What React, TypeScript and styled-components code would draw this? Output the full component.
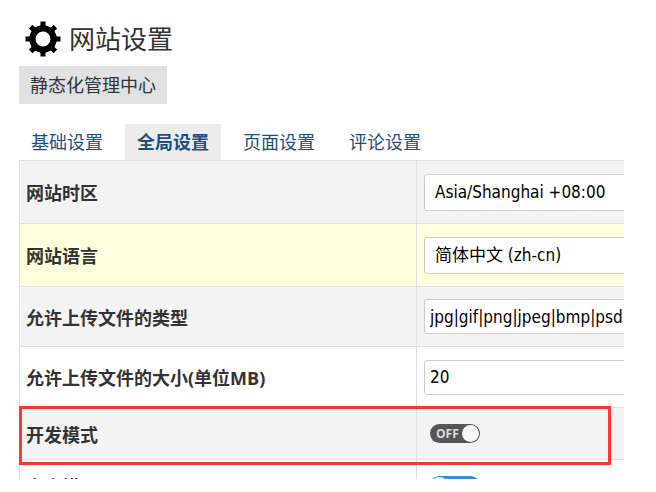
import React from "react";
import styled, { createGlobalStyle } from "styled-components";

const line = "#dfdfdf";

const GlobalStyle = createGlobalStyle`
  * { box-sizing: border-box; }
  body {
    margin: 0;
    background: #fff;
    color: #333;
    font: 18px/24px "Open Sans", "Noto Sans CJK SC", sans-serif;
  }
`;

const Page = styled.main`
  padding: 19px 32px 13px 19px;
`;

const Title = styled.h1`
  display: flex;
  align-items: center;
  gap: 8px;
  margin: 0 0 7px;
  padding-left: 6px;
  font-size: 26px;
  line-height: 40px;
  font-weight: 400;
`;

const CenterButton = styled.button`
  display: block;
  height: 38px;
  padding: 0 11px;
  border: 0;
  background: #dfe1e2;
  color: #333;
  font: inherit;
`;

const Tabs = styled.nav`
  display: flex;
  margin-top: 20px;
`;

const Tab = styled.a<{ $active?: boolean }>`
  padding: 6px 12px;
  margin-right: 10px;
  height: 36px;
  background: ${(p) => (p.$active ? "#ececec" : "transparent")};
  color: #1e4d82;
  font-weight: ${(p) => (p.$active ? 700 : 400)};
  text-decoration: none;
`;

const Frame = styled.div`
  position: relative;
  height: 319px;
  overflow: hidden;
`;

const Table = styled.table`
  width: 100%;
  table-layout: fixed;
  border-collapse: collapse;
  border-left: 1px solid ${line};
`;

const Row = styled.tr<{ $tone: string; $height: number }>`
  height: ${(p) => p.$height}px;
  background: ${(p) => p.$tone};
`;

const Head = styled.th`
  width: 397px;
  padding: 2px 6px 0;
  border-top: 1px solid ${line};
  border-right: 1px solid ${line};
  text-align: left;
  vertical-align: middle;
`;

const Cell = styled.td`
  padding: 0 0 0 7px;
  overflow: hidden;
  border-top: 1px solid ${line};
  vertical-align: middle;
`;

const fieldFont = `
  display: block;
  width: 320px;
  border: 1px solid #ccc;
  border-radius: 3px;
  background: #fff;
  color: #000;
  font: 17px "DejaVu Sans Condensed", "Noto Sans CJK SC", sans-serif;
`;

const Select = styled.select`
  ${fieldFont}
  appearance: none;
  height: 37px;
  padding: 0 10px;
`;

const Input = styled.input`
  ${fieldFont}
  height: 35px;
  padding: 0 5px;
`;

const Switch = styled.label<{ $on?: boolean }>`
  position: relative;
  display: flex;
  align-items: center;
  justify-content: ${(p) => (p.$on ? "flex-end" : "flex-start")};
  width: 50px;
  height: 19px;
  margin-left: 6px;
  padding: 0 6px;
  border-radius: 10px;
  background: ${(p) => (p.$on ? "#2f8fdc" : "#555")};
  color: #ddd;
  font: bold 12px/19px "Open Sans", sans-serif;

  input {
    position: absolute;
    inset: 0;
    margin: 0;
    opacity: 0;
  }

  &::after {
    content: "";
    position: absolute;
    top: 1px;
    ${(p) => (p.$on ? "left" : "right")}: 1px;
    width: 17px;
    height: 17px;
    border-radius: 50%;
    background: #f8f8f8;
  }
`;

const Highlight = styled.div`
  position: absolute;
  top: 246px;
  left: 0;
  width: 592px;
  max-width: 100%;
  height: 59px;
  border: 3px solid #fc3535;
  pointer-events: none;
`;

const teeth = [0, 45, 90, 135, 180, 225, 270, 315];

const Gear = () => (
  <svg width="36" height="36" viewBox="0 0 36 36" aria-hidden="true">
    <circle cx="18" cy="18" r="10.6" fill="none" stroke="#000" strokeWidth="6.2" />
    {teeth.map((a) => (
      <path key={a} d="M14 6.5L15.5 4V.5h5V4L22 6.5z" transform={`rotate(${a} 18 18)`} />
    ))}
  </svg>
);

const tabs = ["基础设置", "全局设置", "页面设置", "评论设置"];

export default function App() {
  return (
    <Page>
      <GlobalStyle />
      <Title>
        <Gear />
        网站设置
      </Title>
      <CenterButton type="button">静态化管理中心</CenterButton>
      <Tabs>
        {tabs.map((t, i) => (
          <Tab key={t} href="#" $active={i === 1}>
            {t}
          </Tab>
        ))}
      </Tabs>
      <Frame>
        <Table>
          <tbody>
            <Row $tone="#f3f3f3" $height={63}>
              <Head scope="row"><label htmlFor="zone">网站时区</label></Head>
              <Cell>
                <Select id="zone"><option>Asia/Shanghai +08:00</option></Select>
              </Cell>
            </Row>
            <Row $tone="#ffffdd" $height={63}>
              <Head scope="row"><label htmlFor="lang">网站语言</label></Head>
              <Cell>
                <Select id="lang"><option>简体中文 (zh-cn)</option></Select>
              </Cell>
            </Row>
            <Row $tone="#f3f3f3" $height={60}>
              <Head scope="row"><label htmlFor="types">允许上传文件的类型</label></Head>
              <Cell><Input id="types" defaultValue="jpg|gif|png|jpeg|bmp|psd" /></Cell>
            </Row>
            <Row $tone="#fff" $height={61}>
              <Head scope="row"><label htmlFor="size">允许上传文件的大小(单位MB)</label></Head>
              <Cell><Input id="size" defaultValue="20" /></Cell>
            </Row>
            <Row $tone="#f3f3f3" $height={52}>
              <Head scope="row"><label htmlFor="dev">开发模式</label></Head>
              <Cell>
                <Switch>
                  <input id="dev" type="checkbox" />
                  OFF
                </Switch>
              </Cell>
            </Row>
            <Row $tone="#fff" $height={52}>
              <Head scope="row"><label htmlFor="safe">安全模限</label></Head>
              <Cell>
                <Switch $on>
                  <input id="safe" type="checkbox" defaultChecked />
                  ON
                </Switch>
              </Cell>
            </Row>
          </tbody>
        </Table>
        <Highlight />
      </Frame>
    </Page>
  );
}
